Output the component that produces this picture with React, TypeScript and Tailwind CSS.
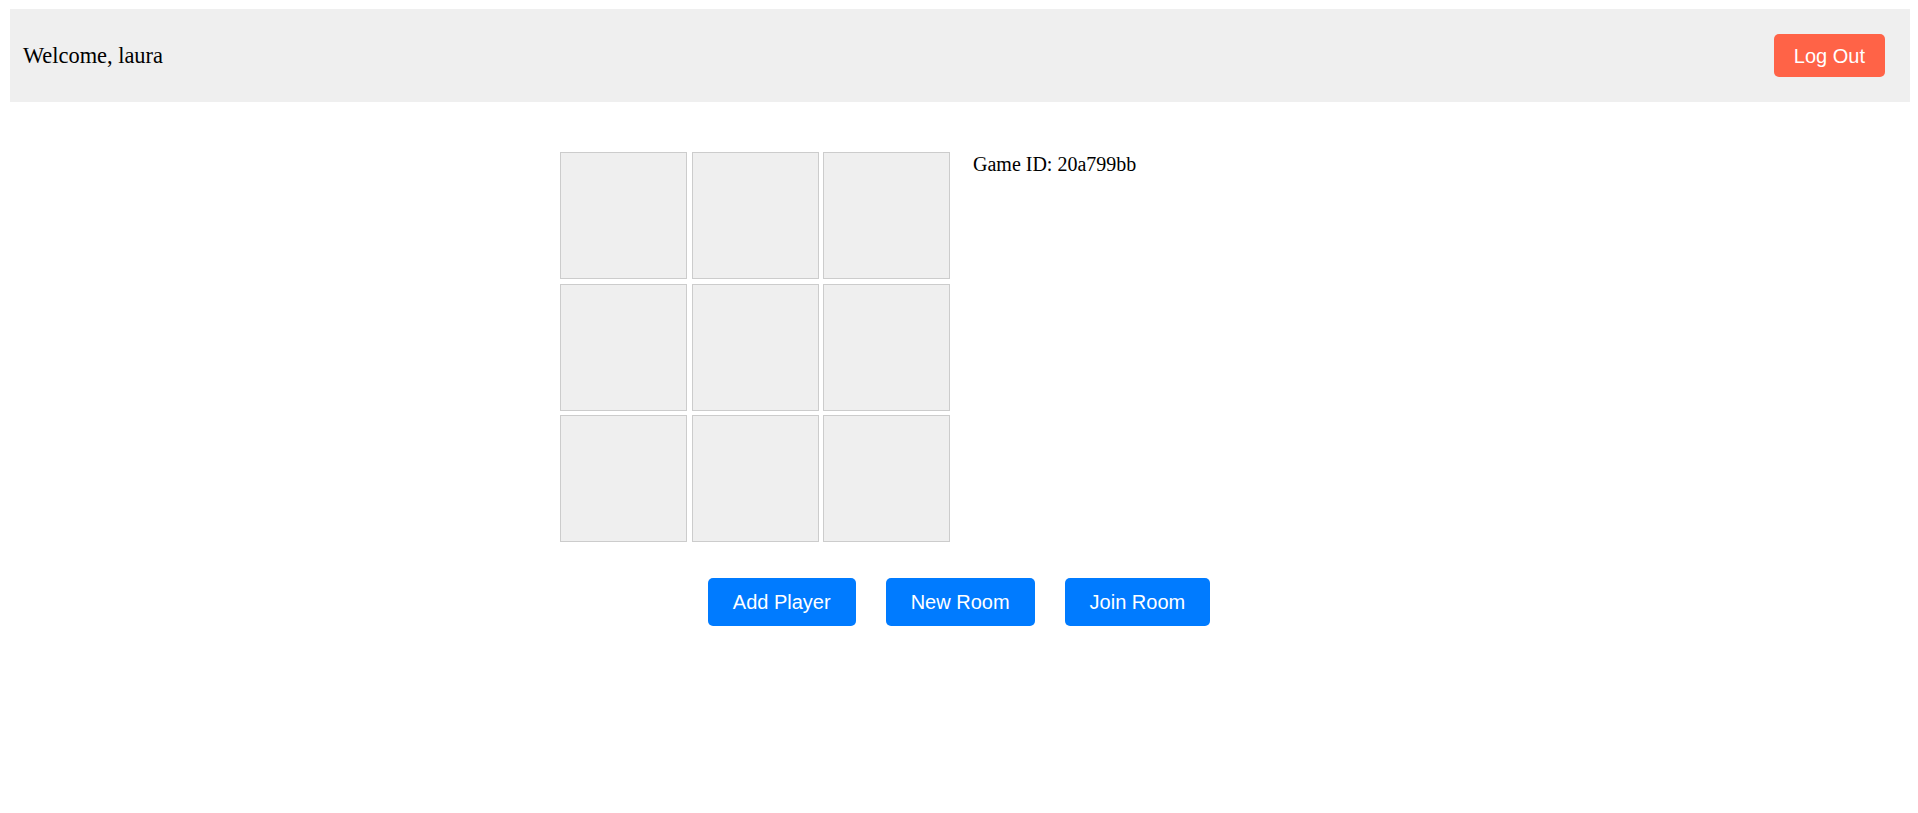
import React from "react";

export default function App() {
  const cells = Array.from({ length: 9 });
  return (
    <div className="min-h-[813px] bg-white pt-[9px]">
      <header className="ml-[10px] mr-[8px] flex h-[93px] items-center justify-between bg-[#efefef] pl-[13px] pr-[25px]">
        <span className="font-['Liberation_Serif',serif] text-[22.4px] text-black">Welcome, laura</span>
        <button className="h-[43px] rounded-[5px] bg-[#ff6347] px-5 font-['Liberation_Sans',Arial,sans-serif] text-[20px] text-white">
          Log Out
        </button>
      </header>
      <div className="mt-[50px] flex justify-center">
        <div className="grid grid-cols-[127px_127px_127px] gap-[4.5px]">
          {cells.map((_, i) => (
            <div key={i} className="h-[127px] w-[127px] border border-[#cccccc] bg-[#efefef]" />
          ))}
        </div>
        <div className="ml-[23px] w-[385px]">
          <p className="mt-[1px] font-['Liberation_Serif',serif] text-[20px] leading-[23px] text-black">Game ID: 20a799bb</p>
        </div>
      </div>
      <div className="mt-[36px] flex justify-center gap-[30px]">
        {["Add Player", "New Room", "Join Room"].map((t) => (
          <button
            key={t}
            className="h-[48px] rounded-[5px] bg-[#007bff] px-[25px] font-['Liberation_Sans',Arial,sans-serif] text-[20px] text-white"
          >
            {t}
          </button>
        ))}
      </div>
    </div>
  );
}
